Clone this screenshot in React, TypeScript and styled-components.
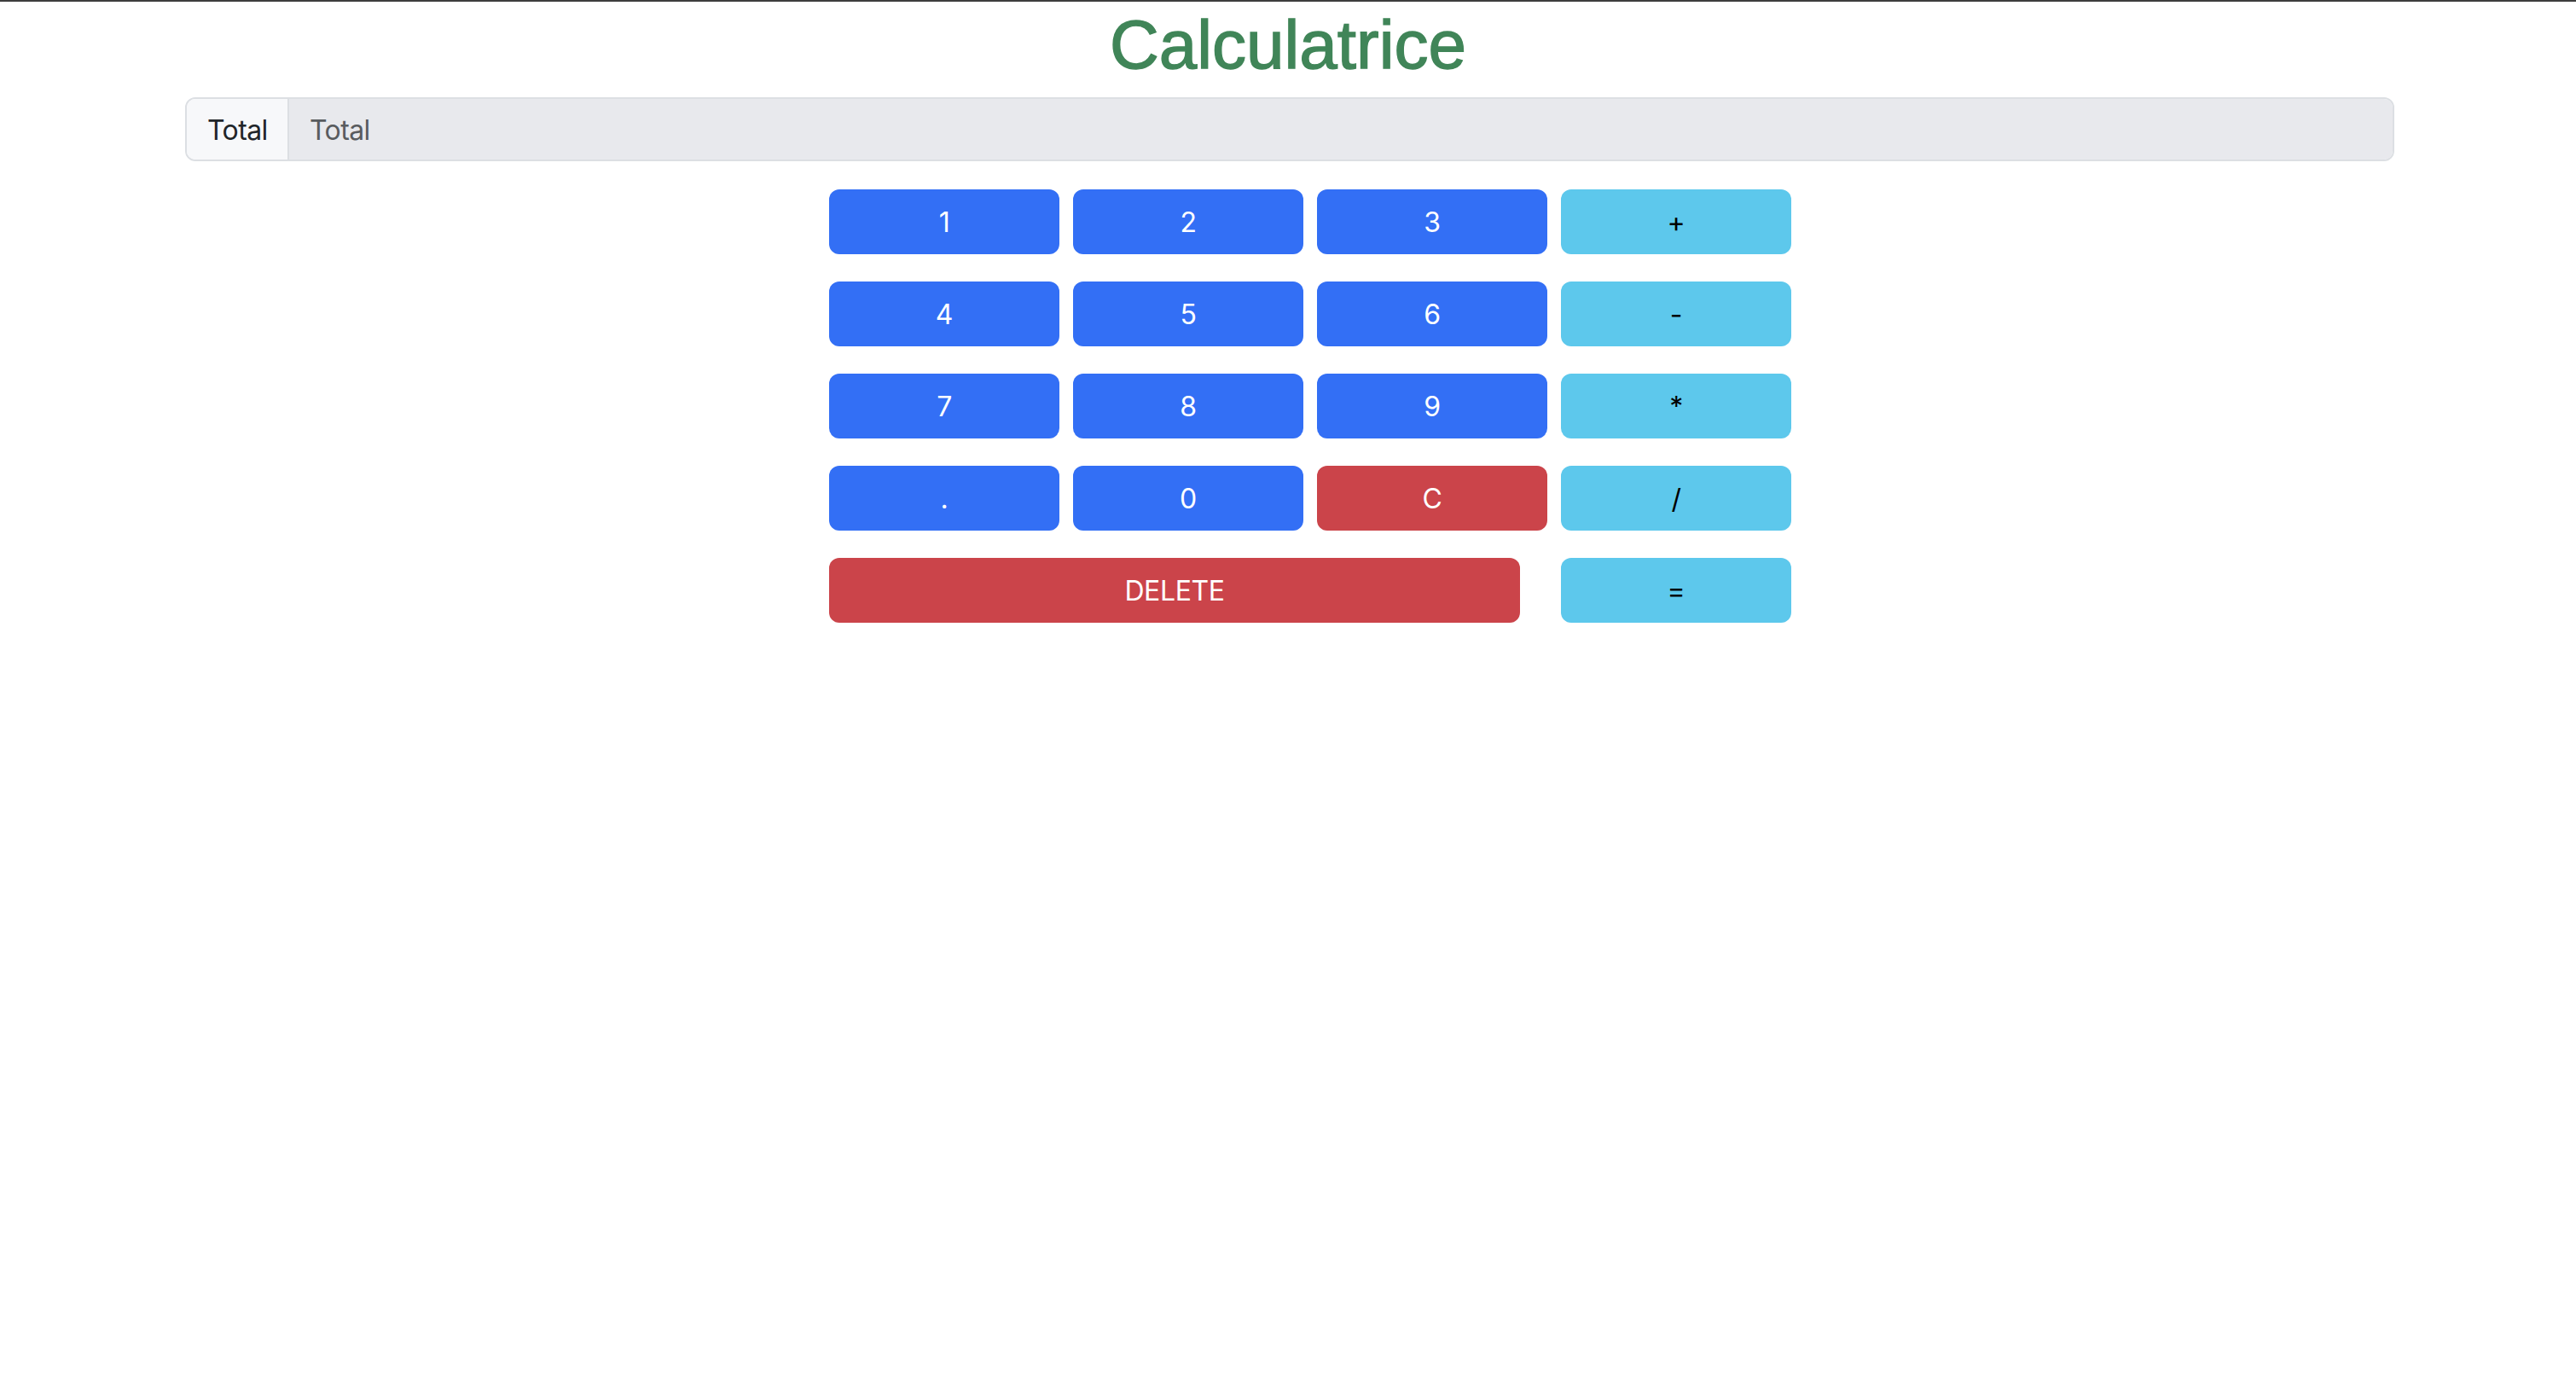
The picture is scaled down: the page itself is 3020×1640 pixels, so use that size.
import React from "react";
import styled, { createGlobalStyle } from "styled-components";

const GlobalStyle = createGlobalStyle`
  html, body {
    margin: 0;
    padding: 0;
    background: #ffffff;
  }
  body {
    font-family: Inter, "Liberation Sans", Arial, sans-serif;
    color: #212529;
  }
  * { box-sizing: border-box; }
`;

const Page = styled.div`
  min-height: 1640px;
  border-top: 2px solid #3d3d3d;
  background: #ffffff;
`;

const Title = styled.h1`
  margin: 3px 0 13px 0;
  text-align: center;
  font-family: "Liberation Sans", Arial, sans-serif;
  font-weight: 400;
  font-size: 80px;
  line-height: 96px;
  color: #408558;
  -webkit-text-stroke: 1.4px #408558;
`;

const InputGroup = styled.div`
  display: flex;
  width: 2590px;
  height: 75px;
  margin-left: calc(50% - 1293px);
  border: 2px solid #dcdfe3;
  border-radius: 12px;
  overflow: hidden;
`;

const Addon = styled.span`
  display: flex;
  align-items: center;
  padding: 2px 22px 0 24px;
  width: 120px;
  background: #f7f8fa;
  border-right: 2px solid #dcdfe3;
  font-size: 32px;
  color: #212529;
  letter-spacing: -0.6px;
`;

const Field = styled.input`
  flex: 1;
  border: none;
  outline: none;
  background: #e8e9ed;
  padding: 2px 24px 0 24px;
  font-family: Inter, "Liberation Sans", Arial, sans-serif;
  font-size: 32px;
  letter-spacing: -0.6px;
  color: #595c5f;
  &::placeholder {
    color: #595c5f;
    opacity: 1;
  }
`;

const Keypad = styled.div`
  display: grid;
  grid-template-columns: repeat(4, 270px);
  grid-auto-rows: 76px;
  column-gap: 16px;
  row-gap: 32px;
  margin-top: 33px;
  margin-left: calc(50% - 538px);
  width: 1128px;
`;

type Variant = "primary" | "danger" | "info";

const colors: Record<Variant, { bg: string; fg: string }> = {
  primary: { bg: "#336ff5", fg: "#ffffff" },
  danger: { bg: "#cb444a", fg: "#ffffff" },
  info: { bg: "#5dc8ec", fg: "#000000" },
};

const Key = styled.button<{ $variant: Variant; $span?: number; $w?: number }>`
  display: flex;
  align-items: center;
  justify-content: center;
  grid-column: span ${(p) => p.$span ?? 1};
  width: ${(p) => (p.$w ? `${p.$w}px` : "100%")};
  height: 76px;
  border: none;
  border-radius: 12px;
  background: ${(p) => colors[p.$variant].bg};
  color: ${(p) => colors[p.$variant].fg};
  font-family: Inter, "Liberation Sans", Arial, sans-serif;
  font-size: 32px;
  font-weight: 400;
  letter-spacing: -0.4px;
  padding: 0;
  cursor: pointer;
`;

const rows: { label: string; variant: Variant }[][] = [
  [
    { label: "1", variant: "primary" },
    { label: "2", variant: "primary" },
    { label: "3", variant: "primary" },
    { label: "+", variant: "info" },
  ],
  [
    { label: "4", variant: "primary" },
    { label: "5", variant: "primary" },
    { label: "6", variant: "primary" },
    { label: "-", variant: "info" },
  ],
  [
    { label: "7", variant: "primary" },
    { label: "8", variant: "primary" },
    { label: "9", variant: "primary" },
    { label: "*", variant: "info" },
  ],
  [
    { label: ".", variant: "primary" },
    { label: "0", variant: "primary" },
    { label: "C", variant: "danger" },
    { label: "/", variant: "info" },
  ],
];

export default function App() {
  return (
    <Page>
      <GlobalStyle />
      <Title>Calculatrice</Title>
      <InputGroup>
        <Addon>Total</Addon>
        <Field placeholder="Total" disabled />
      </InputGroup>
      <Keypad>
        {rows.flat().map((k, i) => (
          <Key key={i} $variant={k.variant}>
            {k.label}
          </Key>
        ))}
        <Key $variant="danger" $span={3} $w={810}>
          DELETE
        </Key>
        <Key $variant="info">=</Key>
      </Keypad>
    </Page>
  );
}
